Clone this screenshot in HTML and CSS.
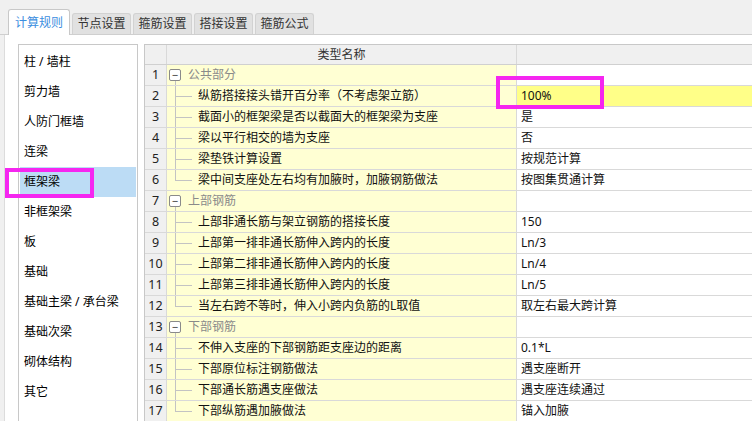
FILE: index.html
```html
<!DOCTYPE html>
<html lang="zh">
<head>
<meta charset="utf-8">
<link rel="stylesheet" href="styles.css">
</head>
<body>
<div class="tabs">
  <div class="tab active">计算规则</div>
  <div class="tab">节点设置</div>
  <div class="tab">箍筋设置</div>
  <div class="tab">搭接设置</div>
  <div class="tab">箍筋公式</div>
</div>
<div class="panel">
  <ul class="list">
    <li>柱 / 墙柱</li>
    <li>剪力墙</li>
    <li>人防门框墙</li>
    <li>连梁</li>
    <li class="sel">框架梁</li>
    <li>非框架梁</li>
    <li>板</li>
    <li>基础</li>
    <li>基础主梁 / 承台梁</li>
    <li>基础次梁</li>
    <li>砌体结构</li>
    <li>其它</li>
  </ul>
  <div class="grid">
    <div class="row head"><div class="num"></div><div class="name">类型名称</div><div class="val"></div></div>
    <div class="row group"><div class="num">1</div><div class="name"><span class="box">−</span><span class="gtext">公共部分</span></div><div class="val"></div></div>
    <div class="row"><div class="num">2</div><div class="name"><span class="branch"></span>纵筋搭接接头错开百分率（不考虑架立筋）</div><div class="val hl">100%</div></div>
    <div class="row"><div class="num">3</div><div class="name"><span class="branch"></span>截面小的框架梁是否以截面大的框架梁为支座</div><div class="val">是</div></div>
    <div class="row"><div class="num">4</div><div class="name"><span class="branch"></span>梁以平行相交的墙为支座</div><div class="val">否</div></div>
    <div class="row"><div class="num">5</div><div class="name"><span class="branch"></span>梁垫铁计算设置</div><div class="val">按规范计算</div></div>
    <div class="row"><div class="num">6</div><div class="name"><span class="branch last"></span>梁中间支座处左右均有加腋时，加腋钢筋做法</div><div class="val">按图集贯通计算</div></div>
    <div class="row group"><div class="num">7</div><div class="name"><span class="box">−</span><span class="gtext">上部钢筋</span></div><div class="val"></div></div>
    <div class="row"><div class="num">8</div><div class="name"><span class="branch"></span>上部非通长筋与架立钢筋的搭接长度</div><div class="val">150</div></div>
    <div class="row"><div class="num">9</div><div class="name"><span class="branch"></span>上部第一排非通长筋伸入跨内的长度</div><div class="val">Ln/3</div></div>
    <div class="row"><div class="num">10</div><div class="name"><span class="branch"></span>上部第二排非通长筋伸入跨内的长度</div><div class="val">Ln/4</div></div>
    <div class="row"><div class="num">11</div><div class="name"><span class="branch"></span>上部第三排非通长筋伸入跨内的长度</div><div class="val">Ln/5</div></div>
    <div class="row"><div class="num">12</div><div class="name"><span class="branch last"></span>当左右跨不等时，伸入小跨内负筋的L取值</div><div class="val">取左右最大跨计算</div></div>
    <div class="row group"><div class="num">13</div><div class="name"><span class="box">−</span><span class="gtext">下部钢筋</span></div><div class="val"></div></div>
    <div class="row"><div class="num">14</div><div class="name"><span class="branch"></span>不伸入支座的下部钢筋距支座边的距离</div><div class="val">0.1*L</div></div>
    <div class="row"><div class="num">15</div><div class="name"><span class="branch"></span>下部原位标注钢筋做法</div><div class="val">遇支座断开</div></div>
    <div class="row"><div class="num">16</div><div class="name"><span class="branch"></span>下部通长筋遇支座做法</div><div class="val">遇支座连续通过</div></div>
    <div class="row"><div class="num">17</div><div class="name"><span class="branch last"></span>下部纵筋遇加腋做法</div><div class="val">锚入加腋</div></div>
  </div>
</div>
<div class="mark mark-list"></div>
<div class="mark mark-cell"></div>
</body>
</html>
```

FILE: styles.css
```css
* { box-sizing: border-box; }
html, body {
  margin: 0;
  width: 752px;
  height: 421px;
  overflow: hidden;
}
body {
  position: relative;
  background: #f0f0f0;
  font-family: "Noto Sans", "Noto Sans CJK SC", sans-serif;
  font-size: 12px;
  color: #111;
}
.tabs {
  display: flex;
  align-items: flex-end;
  gap: 2px;
  height: 35px;
  padding-left: 8px;
  border-bottom: 1px solid #cfcfcf;
}
.tab {
  width: 59px;
  height: 21px;
  line-height: 19px;
  text-align: center;
  background: #e1e1e1;
  border: 1px solid #d2d2d2;
  border-bottom: none;
  border-radius: 3px 3px 0 0;
  color: #333;
}
.tab.active {
  width: 62px;
  height: 26px;
  line-height: 25px;
  margin-bottom: -1px;
  background: #fff;
  border-color: #c8c8c8;
  color: #3b8ee0;
}
.panel {
  display: flex;
  gap: 6px;
  height: 386px;
  margin-left: 4px;
  padding: 9px 0 0 13px;
  background: #fff;
  border-left: 1px solid #dcdcdc;
  overflow: hidden;
}
.list {
  list-style: none;
  margin: 0;
  width: 120px;
  height: 380px;
  padding: 2px 1px;
  border: 1px solid #c8c8c8;
  flex: none;
}
.list li {
  height: 30px;
  line-height: 30px;
  padding-left: 4px;
  color: #000;
  white-space: nowrap;
}
.list li.sel { background: #bcdcf5; }
.grid {
  flex: 1;
  border-left: 1px solid #c8c8c8;
  border-top: 1px solid #c8c8c8;
}
.row {
  display: flex;
  height: 21px;
  border-bottom: 1px solid #d9d9d9;
  line-height: 20px;
}
.num {
  width: 22px;
  flex: none;
  border-right: 1px solid #d9d9d9;
  background: #f0f0f0;
  text-align: center;
  color: #222;
  font-size: 12.5px;
}
.name {
  width: 350px;
  flex: none;
  display: flex;
  align-items: stretch;
  border-right: 1px solid #d9d9d9;
  background: #ffffd3;
  white-space: nowrap;
  overflow: hidden;
}
.val {
  flex: 1;
  padding-left: 4px;
  background: #fff;
  white-space: nowrap;
}
.val.hl { background: #ffff88; }
.head { height: 20px; line-height: 19px; border-bottom-color: #d0d0d0; }
.head .num, .head .name, .head .val { background: #f0f0f0; }
.head .name { justify-content: center; color: #333; }
.branch {
  width: 17px;
  margin-left: 8px;
  margin-right: 6px;
  flex: none;
  background:
    linear-gradient(#c3c3c3, #c3c3c3) 0 0 / 1px 100% no-repeat,
    linear-gradient(#c3c3c3, #c3c3c3) 0 50% / 100% 1px no-repeat;
}
.branch.last {
  background:
    linear-gradient(#c3c3c3, #c3c3c3) 0 0 / 1px 50% no-repeat,
    linear-gradient(#c3c3c3, #c3c3c3) 0 50% / 100% 1px no-repeat;
}
.group .name {
  align-items: center;
  background:
    linear-gradient(#c3c3c3, #c3c3c3) 8px 100% / 1px 5px no-repeat,
    #ffffd3;
}
.box {
  width: 12px;
  height: 12px;
  margin-left: 2px;
  border: 1px solid #8a8a8a;
  border-radius: 2px;
  background: #fff;
  font-size: 11px;
  line-height: 9px;
  text-align: center;
  color: #333;
  flex: none;
}
.gtext {
  margin-left: 7px;
  color: #8a8a8a;
}
.mark {
  position: absolute;
  border: 4px solid #f526f0;
}
.mark-list { left: 5px; top: 168px; width: 89px; height: 30px; }
.mark-cell { left: 496px; top: 76px; width: 108px; height: 33px; }
```
